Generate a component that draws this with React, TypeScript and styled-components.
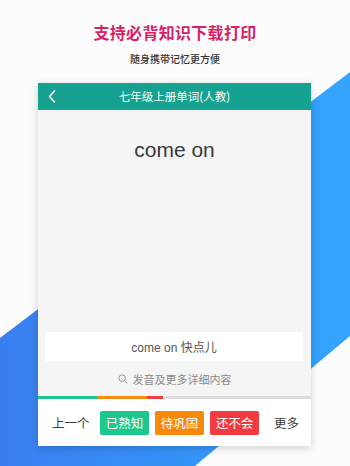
import React from "react";
import styled, { createGlobalStyle } from "styled-components";

const Global = createGlobalStyle`
  html, body { margin: 0; padding: 0; background: #fff; }
  * { box-sizing: border-box; }
`;

const CJK = `"Noto Sans CJK SC", "Noto Sans", sans-serif`;
const LATIN = `"Liberation Sans", "Noto Sans CJK SC", sans-serif`;

const Page = styled.div`
  position: relative;
  width: 350px;
  height: 466px;
  overflow: hidden;
  background: #fcfcfc;
  font-family: ${CJK};
  display: flex;
  flex-direction: column;
  align-items: flex-start;
  padding-top: 22px;
  &::before {
    content: "";
    position: absolute;
    inset: 0;
    background: linear-gradient(90deg, #3a7ef0 0%, #3592f7 50%, #34a5ff 100%);
    clip-path: polygon(0 338px, 350px 72px, 350px 336px, 195px 466px, 0 466px);
    z-index: 0;
  }
`;

const Title = styled.h1`
  position: relative;
  z-index: 1;
  margin: 0;
  width: 100%;
  text-align: center;
  font-size: 16px;
  line-height: 20px;
  font-weight: 700;
  color: #d81f68;
  letter-spacing: 0.3px;
`;

const Subtitle = styled.p`
  position: relative;
  z-index: 1;
  margin: 10px 0 0;
  width: 100%;
  text-align: center;
  font-size: 10px;
  line-height: 14px;
  font-weight: 500;
  color: #333;
`;

const Card = styled.div`
  position: relative;
  z-index: 1;
  margin: 17px 0 0 38px;
  width: 273px;
  display: flex;
  flex-direction: column;
  background: #f5f5f5;
  box-shadow: 0 2px 8px rgba(0, 0, 0, 0.18);
`;

const Header = styled.div`
  height: 27px;
  background: #16a290;
  display: grid;
  grid-template-columns: 1fr auto 1fr;
  align-items: center;
  color: #fff;
`;

const Back = styled.div`
  padding-left: 10px;
  display: flex;
  align-items: center;
`;

const HeaderTitle = styled.div`
  font-size: 11.5px;
  line-height: 27px;
  color: #fff;
`;

const Body = styled.div`
  height: 286px;
  display: flex;
  flex-direction: column;
`;

const Word = styled.div`
  margin-top: 26px;
  height: 28px;
  text-align: center;
  font-family: ${LATIN};
  font-size: 21px;
  line-height: 28px;
  color: #3a3a3a;
`;

const Spacer = styled.div`
  flex: 1;
`;

const Meaning = styled.div`
  margin: 0 8px 0 7px;
  height: 29px;
  background: #fff;
  display: flex;
  align-items: center;
  justify-content: center;
  font-family: ${LATIN};
  font-size: 12px;
  color: #555;
`;

const MoreLine = styled.div`
  height: 35px;
  display: flex;
  align-items: center;
  justify-content: center;
  gap: 5px;
  font-size: 11px;
  color: #8a8a8a;
`;

const Progress = styled.div`
  height: 3px;
  display: flex;
  background: #dcdcdc;
`;

const Seg = styled.div<{ $c: string }>`
  height: 100%;
  background: ${(p) => p.$c};
`;

const Bottom = styled.div`
  height: 47px;
  background: #fff;
  display: grid;
  grid-template-columns: 34px 160px 22px;
  column-gap: 14px;
  padding-left: 14px;
  align-items: center;
  font-size: 13px;
  color: #444;
`;

const NavText = styled.div`
  white-space: nowrap;
  font-size: 12.5px;
  color: #3c3c3c;
`;

const Buttons = styled.div`
  display: flex;
  gap: 6px;
`;

const Btn = styled.div<{ $bg: string }>`
  width: 49px;
  height: 24px;
  border-radius: 2px;
  background: ${(p) => p.$bg};
  color: #fff;
  font-size: 12.5px;
  display: flex;
  align-items: center;
  justify-content: center;
`;

const segments = [
  { c: "#1cc78b", w: 59 },
  { c: "#f68b0e", w: 50 },
  { c: "#ef3d42", w: 16 },
];

export default function App() {
  return (
    <>
      <Global />
      <Page>
        <Title>支持必背知识下载打印</Title>
        <Subtitle>随身携带记忆更方便</Subtitle>
        <Card>
          <Header>
            <Back>
              <svg width="8" height="13" viewBox="0 0 8 13">
                <path d="M6.5 1 L1.5 6.5 L6.5 12" fill="none" stroke="#fff" strokeWidth="1.6" strokeLinecap="round" strokeLinejoin="round" />
              </svg>
            </Back>
            <HeaderTitle>七年级上册单词(人教)</HeaderTitle>
            <div />
          </Header>
          <Body>
            <Word>come on</Word>
            <Spacer />
            <Meaning>come on 快点儿</Meaning>
            <MoreLine>
              <svg width="10" height="10" viewBox="0 0 10 10">
                <circle cx="4.2" cy="4.2" r="3.3" fill="none" stroke="#999" strokeWidth="1" />
                <path d="M6.6 6.6 L9 9" stroke="#999" strokeWidth="1" strokeLinecap="round" />
              </svg>
              <span>发音及更多详细内容</span>
            </MoreLine>
          </Body>
          <Progress>
            {segments.map((s) => (
              <Seg key={s.c} $c={s.c} style={{ width: s.w }} />
            ))}
          </Progress>
          <Bottom>
            <NavText>上一个</NavText>
            <Buttons>
              <Btn $bg="#1cc78b">已熟知</Btn>
              <Btn $bg="#f7890b">待巩固</Btn>
              <Btn $bg="#f23a42">还不会</Btn>
            </Buttons>
            <NavText>更多</NavText>
          </Bottom>
        </Card>
      </Page>
    </>
  );
}
